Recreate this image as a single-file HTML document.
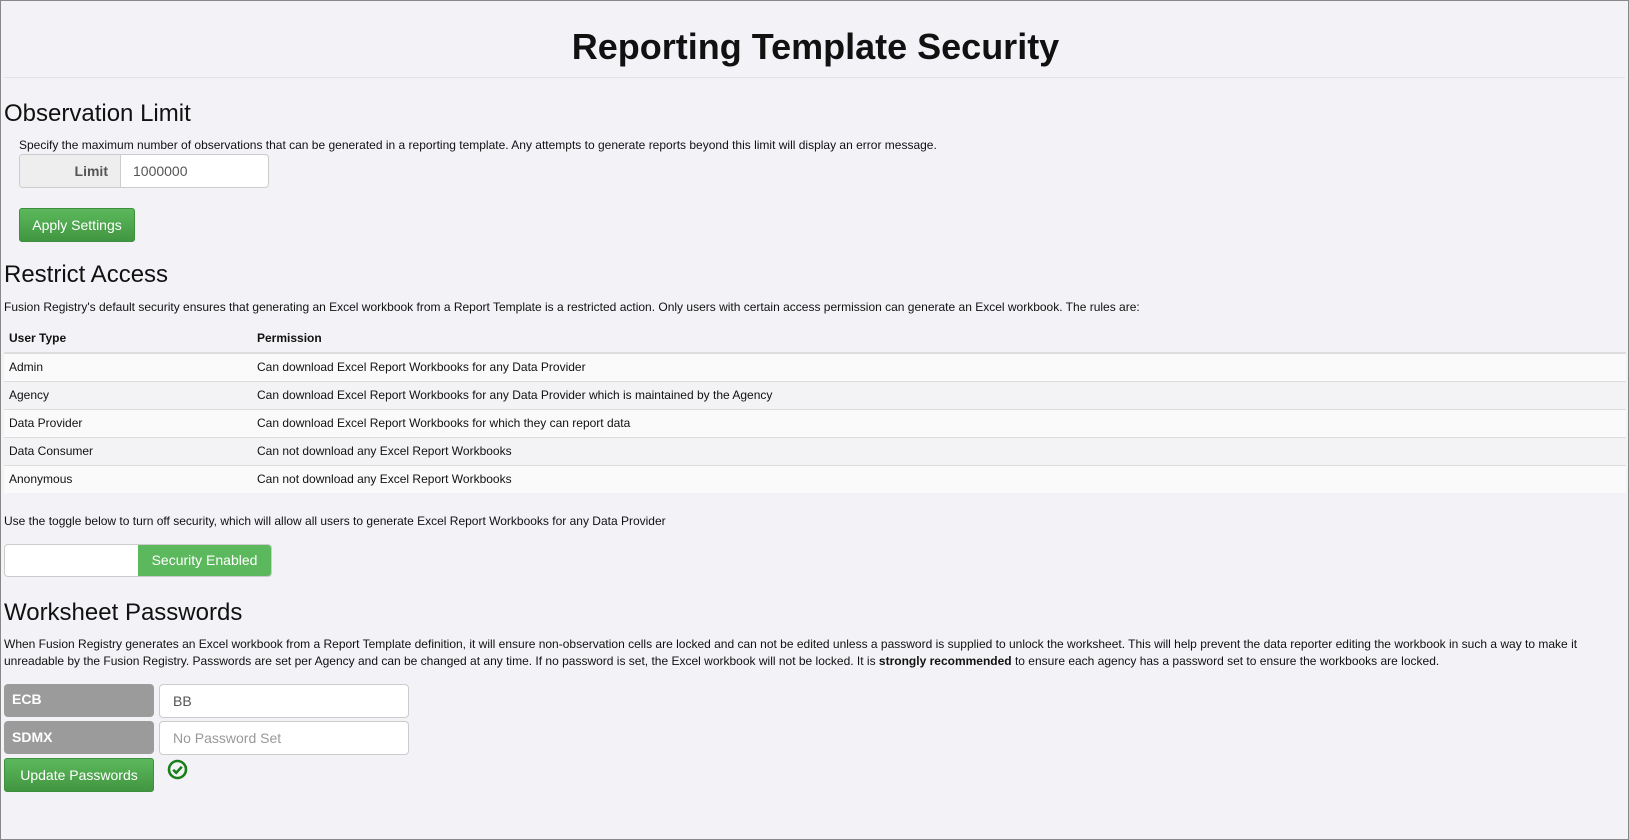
<!DOCTYPE html>
<html><head><meta charset="utf-8"><style>
*{box-sizing:border-box;margin:0;padding:0}
html,body{width:1629px;height:840px;overflow:hidden}
body{background:#f3f3f7;font-family:"Liberation Sans",Arial,sans-serif;color:#111;position:relative;border:1px solid #888;font-size:12px}
.a{position:absolute;white-space:nowrap}
h1{position:absolute;left:0;width:1629px;text-align:center;top:25px;font-size:36px;font-weight:bold;line-height:42px}
.hr{position:absolute;left:3px;right:3px;top:76px;border-top:1px solid #e2e2e8}
.h2{font-size:24px;line-height:28px}
.btn{position:absolute;background:linear-gradient(#5cb85c,#419641);border:1px solid #3e8f3e;border-radius:3px;color:#fff;font-size:14px;text-align:center}
table{position:absolute;left:3px;top:322px;width:1622px;border-collapse:collapse;font-size:12px}
td,th{text-align:left;padding:0 5px;height:28px}
th{height:30px;border-bottom:2px solid #ddd;font-weight:bold}
td{border-top:1px solid #ddd}
tr.o td{background:#fafafa}
tr.e td{background:#f3f3f6}
.inp{position:absolute;background:#fff;border:1px solid #ccc;border-radius:4px;font-size:14px;color:#555;padding-left:13px}
.lbl{position:absolute;background:#9b9b9b;border-radius:4px;color:#fff;font-weight:bold;font-size:14px;padding-left:8px}
</style></head><body>
<h1>Reporting Template Security</h1>
<div class="hr"></div>
<div class="a h2" style="left:3px;top:99px">Observation Limit</div>
<div class="a" style="left:18px;top:137px">Specify the maximum number of observations that can be generated in a reporting template. Any attempts to generate reports beyond this limit will display an error message.</div>
<div style="position:absolute;left:18px;top:153px;width:250px;height:34px;border:1px solid #ccc;border-radius:4px;background:#fff;overflow:hidden">
 <div style="position:absolute;left:0;top:0;width:101px;height:32px;background:#eee;border-right:1px solid #ccc;font-weight:bold;font-size:14px;color:#555;text-align:right;padding-right:12px;line-height:32px">Limit</div>
 <div style="position:absolute;left:113px;top:0;line-height:32px;font-size:14px;color:#555">1000000</div>
</div>
<div class="btn" style="left:18px;top:207px;width:116px;height:34px;line-height:32px">Apply Settings</div>
<div class="a h2" style="left:3px;top:260px">Restrict Access</div>
<div class="a" style="left:3px;top:299px">Fusion Registry's default security ensures that generating an Excel workbook from a Report Template is a restricted action. Only users with certain access permission can generate an Excel workbook. The rules are:</div>
<table>
<tr><th style="width:248px">User Type</th><th>Permission</th></tr>
<tr class="o"><td>Admin</td><td>Can download Excel Report Workbooks for any Data Provider</td></tr>
<tr class="e"><td>Agency</td><td>Can download Excel Report Workbooks for any Data Provider which is maintained by the Agency</td></tr>
<tr class="o"><td>Data Provider</td><td>Can download Excel Report Workbooks for which they can report data</td></tr>
<tr class="e"><td>Data Consumer</td><td>Can not download any Excel Report Workbooks</td></tr>
<tr class="o"><td>Anonymous</td><td>Can not download any Excel Report Workbooks</td></tr>
</table>
<div class="a" style="left:3px;top:513px">Use the toggle below to turn off security, which will allow all users to generate Excel Report Workbooks for any Data Provider</div>
<div style="position:absolute;left:3px;top:543px;width:268px;height:33px;border:1px solid #ccc;border-radius:4px;background:#fff;overflow:hidden">
 <div style="position:absolute;left:133px;top:0;right:0;bottom:0;background:#5cb85c;color:#fff;font-size:14px;text-align:center;line-height:31px">Security Enabled</div>
</div>
<div class="a h2" style="left:3px;top:598px">Worksheet Passwords</div>
<div style="position:absolute;left:3px;top:635px;width:1620px;line-height:17px;font-size:12px">When Fusion Registry generates an Excel workbook from a Report Template definition, it will ensure non-observation cells are locked and can not be edited unless a password is supplied to unlock the worksheet. This will help prevent the data reporter editing the workbook in such a way to make it unreadable by the Fusion Registry. Passwords are set per Agency and can be changed at any time. If no password is set, the Excel workbook will not be locked. It is <b>strongly recommended</b> to ensure each agency has a password set to ensure the workbooks are locked.</div>
<div class="lbl" style="left:3px;top:683px;width:150px;height:33px;line-height:31px">ECB</div>
<div class="inp" style="left:158px;top:683px;width:250px;height:34px;line-height:32px">BB</div>
<div class="lbl" style="left:3px;top:720px;width:150px;height:33px;line-height:33px">SDMX</div>
<div class="inp" style="left:158px;top:720px;width:250px;height:34px;line-height:32px;color:#999">No Password Set</div>
<div class="btn" style="left:3px;top:757px;width:150px;height:34px;line-height:32px">Update Passwords</div>
<svg class="a" style="left:166px;top:758px" width="21" height="21" viewBox="0 0 21 21"><circle cx="10.5" cy="10.5" r="8.5" fill="none" stroke="#1a7f1a" stroke-width="2.6"/><path d="M6.2 10.8l3 3 5.6-6" fill="none" stroke="#1a7f1a" stroke-width="2.6"/></svg>
</body></html>
